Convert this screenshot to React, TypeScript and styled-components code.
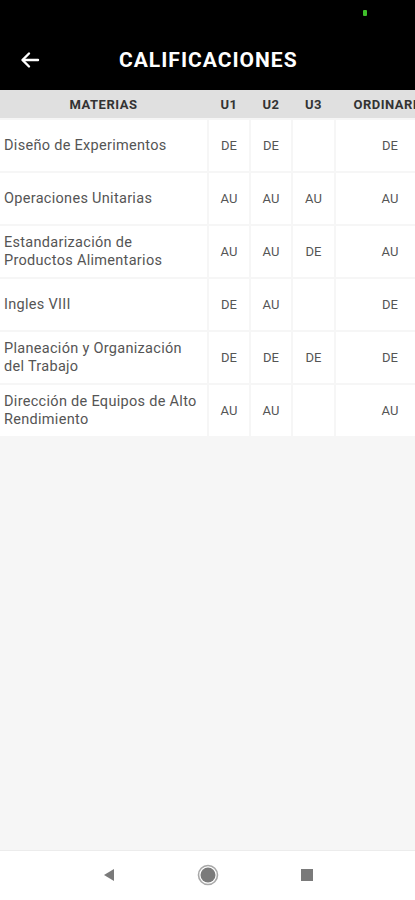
import styled, { createGlobalStyle } from "styled-components";

type Row = { name: string; u1?: string; u2?: string; u3?: string; ord?: string };

const rows: Row[] = [
  { name: "Diseño de Experimentos", u1: "DE", u2: "DE", ord: "DE" },
  { name: "Operaciones Unitarias", u1: "AU", u2: "AU", u3: "AU", ord: "AU" },
  { name: "Estandarización de Productos Alimentarios", u1: "AU", u2: "AU", u3: "DE", ord: "AU" },
  { name: "Ingles VIII", u1: "DE", u2: "AU", ord: "DE" },
  { name: "Planeación y Organización del Trabajo", u1: "DE", u2: "DE", u3: "DE", ord: "DE" },
  { name: "Dirección de Equipos de Alto Rendimiento", u1: "AU", u2: "AU", ord: "AU" },
];

const GlobalStyle = createGlobalStyle`
  * { box-sizing: border-box; }
  body {
    margin: 0;
    font-family: Roboto, "Noto Sans", sans-serif;
    background: #f6f6f6;
  }
`;

const App = () => {
  return (
    <Page>
      <GlobalStyle />
      <AppBar>
        <StatusBar>
          <SignalDot />
        </StatusBar>
        <Toolbar>
          <svg width="24" height="24" viewBox="0 0 24 24" fill="none" stroke="#fff" strokeWidth="2.4" strokeLinecap="round" strokeLinejoin="round">
            <path d="M20 12H5" />
            <path d="M11 5.5L4.5 12L11 18.5" />
          </svg>
          <Title>CALIFICACIONES</Title>
        </Toolbar>
      </AppBar>

      <Table>
        <HeadRow>
          <HeadCell>MATERIAS</HeadCell>
          <HeadCell>U1</HeadCell>
          <HeadCell>U2</HeadCell>
          <HeadCell>U3</HeadCell>
          <HeadCell>ORDINARIO</HeadCell>
        </HeadRow>
        {rows.map((r) => (
          <BodyRow key={r.name}>
            <NameCell>{r.name}</NameCell>
            <ValueCell>{r.u1}</ValueCell>
            <ValueCell>{r.u2}</ValueCell>
            <ValueCell>{r.u3}</ValueCell>
            <ValueCell>{r.ord}</ValueCell>
          </BodyRow>
        ))}
      </Table>

      <Spacer />

      <NavBar>
        <svg width="16" height="16" viewBox="0 0 16 16">
          <path d="M13 2L3 8l10 6z" fill="#7a7a7a" />
        </svg>
        <svg width="22" height="22" viewBox="0 0 22 22">
          <circle cx="11" cy="11" r="9.5" fill="none" stroke="#a8a8a8" strokeWidth="1.6" />
          <circle cx="11" cy="11" r="7.5" fill="#7a7a7a" />
        </svg>
        <svg width="16" height="16" viewBox="0 0 16 16">
          <rect x="2" y="2" width="12" height="12" fill="#7a7a7a" />
        </svg>
      </NavBar>
    </Page>
  );
};

const Page = styled.div`
  display: flex;
  flex-direction: column;
  height: 900px;
  width: 415px;
  overflow: hidden;
  background: #f6f6f6;
`;

const AppBar = styled.header`
  background: #000;
  height: 90px;
  display: flex;
  flex-direction: column;
`;

const StatusBar = styled.div`
  height: 30px;
  display: flex;
  justify-content: flex-end;
  align-items: center;
  padding-right: 48px;
  padding-bottom: 4px;
`;

const SignalDot = styled.span`
  width: 4px;
  height: 6px;
  border-radius: 1px;
  background: #3fbf2a;
`;

const Toolbar = styled.div`
  height: 60px;
  display: flex;
  align-items: center;
  padding-left: 18px;
`;

const Title = styled.h1`
  margin: 0 0 0 77px;
  color: #fff;
  font-size: 21px;
  font-weight: 700;
  letter-spacing: 1px;
`;

const Table = styled.div`
  display: flex;
  flex-direction: column;
  gap: 2px;
  overflow: hidden;
`;

const columns = "207px 40px 40px 41px 108px";

const HeadRow = styled.div`
  display: grid;
  grid-template-columns: ${columns};
  column-gap: 2px;
  height: 28px;
  background: #e0e0e0;
  width: max-content;
`;

const HeadCell = styled.div`
  display: flex;
  align-items: center;
  justify-content: center;
  font-size: 13px;
  font-weight: 700;
  color: #333;
  letter-spacing: 0.5px;
  white-space: nowrap;
`;

const BodyRow = styled.div`
  display: grid;
  grid-template-columns: ${columns};
  column-gap: 2px;
  height: 51px;
  width: max-content;
`;

const NameCell = styled.div`
  background: #fff;
  display: flex;
  align-items: center;
  padding: 0 10px 0 4px;
  font-size: 14.5px;
  line-height: 18px;
  letter-spacing: 0.3px;
  color: #555;
`;

const ValueCell = styled.div`
  background: #fff;
  display: flex;
  align-items: center;
  justify-content: center;
  font-size: 13px;
  color: #555;
`;

const Spacer = styled.div`
  flex: 1;
`;

const NavBar = styled.nav`
  height: 50px;
  background: #fff;
  border-top: 1px solid #ececec;
  display: flex;
  align-items: center;
  justify-content: center;
  gap: 80px;
  padding-bottom: 2px;
`;

export default App;
